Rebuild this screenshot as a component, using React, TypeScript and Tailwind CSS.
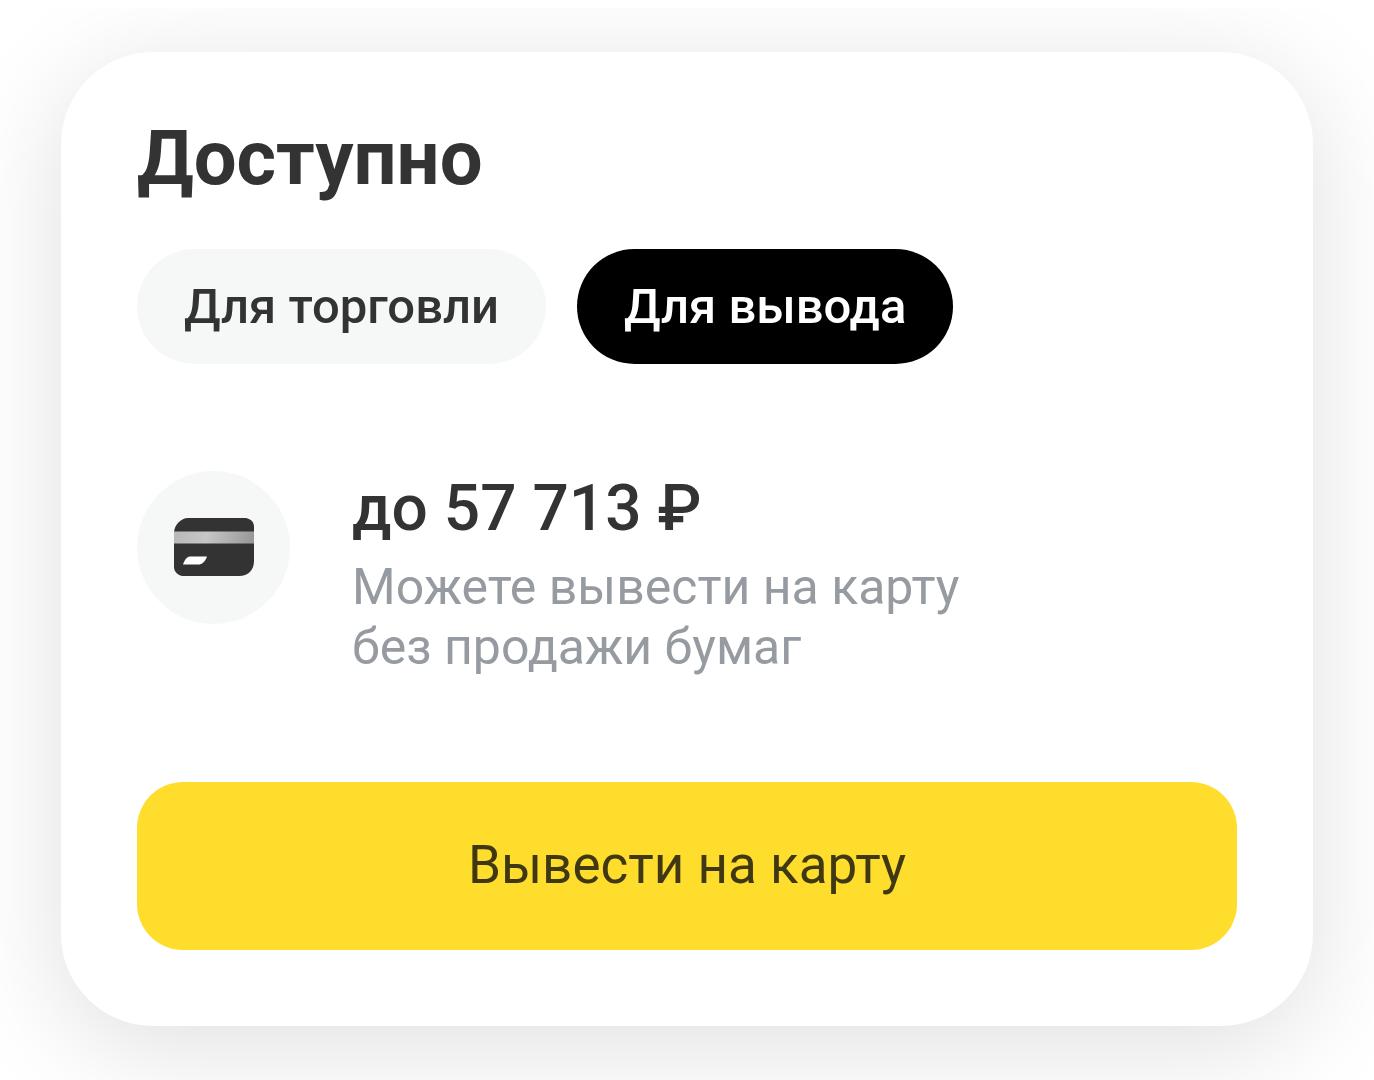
import { useState } from "react";
import clsx from "clsx";

const TABS = [
    { id: "trade", label: "Для торговли" },
    { id: "withdraw", label: "Для вывода" },
];

function CardIcon() {
    return (
        <svg viewBox="0 0 82 60" className="w-[82px] h-[60px]" aria-hidden="true">
            <defs>
                <linearGradient id="stripe" x1="2" y1="10" x2="82" y2="30" gradientUnits="userSpaceOnUse">
                    <stop offset="0" stopColor="#b8b8b8" />
                    <stop offset="0.4" stopColor="#c6c6c6" />
                    <stop offset="1" stopColor="#949494" />
                </linearGradient>
            </defs>
            <path
                d="M15 0H73C78 1 81 4 81 9V43C81 52 75 58 66 58H9C5 57 1 54 1 49V15C1 7 8 0 15 0Z"
                fill="#333333"
            />
            <path d="M1 13.5H81V25.5H1Z" fill="url(#stripe)" />
            <path d="M18 38.5H34C32 44 29 46.5 25 46.5H10C12 41 14 38.5 18 38.5Z" fill="#ffffff" />
        </svg>
    );
}

export default function App() {
    const [active, setActive] = useState("withdraw");

    return (
        <main className="min-h-screen overflow-hidden border-t-8 border-white bg-white px-[61px] pt-[44px] pb-[54px] font-[Roboto,sans-serif] text-[#333333]">
            <section className="rounded-[92px] bg-white px-[76px] pt-[62px] pb-[76px] shadow-[0_20px_108px_rgba(0,0,0,0.13)]">
                <h1 className="text-[76px] leading-[88px] font-bold">Доступно</h1>

                <div className="mt-[47px] flex gap-[31px]">
                    {TABS.map((tab) => (
                        <button
                            key={tab.id}
                            type="button"
                            aria-pressed={active === tab.id}
                            onClick={() => setActive(tab.id)}
                            className={clsx(
                                "h-[115px] rounded-full px-[47px] text-[49px] font-medium whitespace-nowrap",
                                active === tab.id ? "bg-black text-white" : "bg-[#f6f8f8] text-[#333333]"
                            )}
                        >
                            {tab.label}
                        </button>
                    ))}
                </div>

                <div className="mt-[107px] flex gap-[62px]">
                    <div className="flex size-[153px] shrink-0 items-center justify-center rounded-full bg-[#f6f8f8]">
                        <CardIcon />
                    </div>
                    <div>
                        <p className="text-[64px] leading-[76px] font-medium">до 57 713 ₽</p>
                        <p className="mt-[10px] text-[50px] leading-[60px] text-[#969aa1]">
                            Можете вывести на карту
                            <br />
                            без продажи бумаг
                        </p>
                    </div>
                </div>

                <button
                    type="button"
                    className="mt-[105px] h-[168px] w-full rounded-[46px] bg-[#ffdd2d] text-[53px] text-[#403812]"
                >
                    Вывести на карту
                </button>
            </section>
        </main>
    );
}
